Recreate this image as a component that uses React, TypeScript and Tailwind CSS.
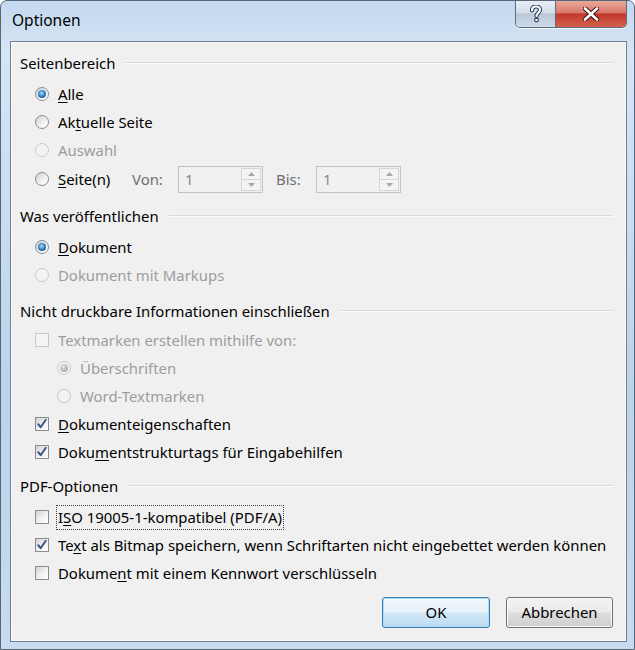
import React from "react";

function Radio({ checked, disabled }: { checked?: boolean; disabled?: boolean }) {
  return (
    <span
      className={`flex h-[14px] w-[14px] shrink-0 items-center justify-center rounded-full border ${
        disabled
          ? "border-[#c9c9c9] bg-[#f3f3f3]"
          : "border-[#8c8c8c] bg-[linear-gradient(135deg,#cfcfcf,#f8f8f8_70%,#ffffff)]"
      }`}
    >
      {checked && (
        <span
          className={`h-[8px] w-[8px] rounded-full ${
            disabled
              ? "bg-[radial-gradient(circle_at_40%_35%,#e6e6e6,#a6a6a6_75%)]"
              : "bg-[radial-gradient(circle_at_45%_40%,#a8e2ff,#2a74b8_55%,#0c3a6c)]"
          }`}
        />
      )}
    </span>
  );
}

function Check({ checked, disabled }: { checked?: boolean; disabled?: boolean }) {
  return (
    <span
      className={`relative flex h-[14px] w-[14px] shrink-0 items-center justify-center border ${
        disabled
          ? "border-[#c9c9c9] bg-[#f4f4f4]"
          : "border-[#8c8c8c] bg-[linear-gradient(135deg,#d2d2d2,#f4f4f4_60%,#ffffff)]"
      }`}
    >
      {checked && (
        <svg width="12" height="12" viewBox="0 0 12 12" className="absolute left-[0px] top-[0px]">
          <path d="M2.2 6.2 L4.6 9.2 L9.8 1.8" fill="none" stroke="#3d5487" strokeWidth="2" strokeLinecap="round" strokeLinejoin="round" />
        </svg>
      )}
    </span>
  );
}

function U({ children }: { children: React.ReactNode }) {
  return <span className="underline decoration-1 underline-offset-[2px]">{children}</span>;
}

function RadioRow({
  checked,
  disabled,
  children,
  indent = "pl-[15px]",
}: {
  checked?: boolean;
  disabled?: boolean;
  children: React.ReactNode;
  indent?: string;
}) {
  return (
    <div className={`flex h-[28px] items-center gap-[9px] ${indent} ${disabled ? "text-[#9d9d9d]" : "text-black"}`}>
      <Radio checked={checked} disabled={disabled} />
      <span>{children}</span>
    </div>
  );
}

function CheckRow({
  checked,
  disabled,
  children,
  focus,
}: {
  checked?: boolean;
  disabled?: boolean;
  children: React.ReactNode;
  focus?: boolean;
}) {
  return (
    <div className={`flex h-[28px] items-center gap-[7px] pl-[15px] ${disabled ? "text-[#9d9d9d]" : "text-black"}`}>
      <Check checked={checked} disabled={disabled} />
      <span className={focus ? "border border-dotted border-[#444] px-[1px] leading-[23px]" : "pl-[2px]"}>{children}</span>
    </div>
  );
}

function Heading({ children }: { children: React.ReactNode }) {
  return (
    <div className="flex h-[28px] items-center gap-[10px]">
      <span className="text-black">{children}</span>
      <div className="h-[2px] flex-1 border-t border-b border-t-[#d7dbe0] border-b-[#fbfbfb]" />
    </div>
  );
}

function Spin() {
  return (
    <div className="flex h-[27px] w-[85px] border border-[#c3c3c3] bg-[#f1f1f1]">
      <span className="flex-1 pl-[6px] leading-[25px] text-[#8a8a8a]">1</span>
      <div className="my-[1px] mr-[1px] flex w-[20px] flex-col border border-[#d6d6d6] bg-[#f4f4f4]">
        <div className="flex flex-1 items-center justify-center border-b border-[#d6d6d6]">
          <svg width="7" height="4" viewBox="0 0 7 4">
            <path d="M0 4 L3.5 0 L7 4 Z" fill="#a8a8a8" />
          </svg>
        </div>
        <div className="flex flex-1 items-center justify-center">
          <svg width="7" height="4" viewBox="0 0 7 4">
            <path d="M0 0 L3.5 4 L7 0 Z" fill="#a8a8a8" />
          </svg>
        </div>
      </div>
    </div>
  );
}

export default function App() {
  return (
    <div className="relative h-[650px] w-[635px] overflow-hidden rounded-t-[7px] border border-[#56677a] bg-[linear-gradient(180deg,#c4d8ee_0%,#d6e5f5_8%,#bcd3ec_60%,#c8dbf0_100%)] font-['Noto_Sans',sans-serif] text-[14.9px]">
      {/* title bar */}
      <div className="flex h-[40px] items-start">
        <div className="pl-[11px] pt-[7px] text-[15.5px] leading-[24px] text-black">Optionen</div>
        <div className="flex-1" />
        <div className="mr-[7px] flex h-[27px] overflow-hidden rounded-b-[5px] border border-t-0 border-[#5d6b7c] shadow-[0_1px_0_rgba(255,255,255,0.7)]">
          <div className="flex w-[40px] items-center justify-center border-r border-[#5d6b7c] bg-[linear-gradient(180deg,#e7eef6_0%,#d3dde9_45%,#b9c7d8_50%,#cfdae8_100%)]">
            <svg width="14" height="18" viewBox="0 0 14 18">
              <path d="M3 5.5 C3 2.5 5 1.5 7 1.5 C9.5 1.5 11 3 11 5 C11 7.5 7.5 8 7.5 11" fill="none" stroke="#2b3a52" strokeWidth="4.2" strokeLinecap="round" strokeLinejoin="round" />
              <circle cx="7.5" cy="15" r="2.4" fill="#2b3a52" />
              <path d="M3 5.5 C3 2.5 5 1.5 7 1.5 C9.5 1.5 11 3 11 5 C11 7.5 7.5 8 7.5 11" fill="none" stroke="#ffffff" strokeWidth="2.2" strokeLinecap="round" strokeLinejoin="round" />
              <circle cx="7.5" cy="15" r="1.3" fill="#ffffff" />
            </svg>
          </div>
          <div className="flex w-[70px] items-center justify-center bg-[linear-gradient(180deg,#e9a99a_0%,#d9776a_45%,#c2372a_50%,#d4614e_100%)]">
            <svg width="16" height="14" viewBox="0 0 16 14">
              <path d="M2 1.5 L14 12.5 M14 1.5 L2 12.5" stroke="#3a1010" strokeWidth="4.6" strokeLinecap="round" />
              <path d="M2 1.5 L14 12.5 M14 1.5 L2 12.5" stroke="#ffffff" strokeWidth="2.6" strokeLinecap="round" />
            </svg>
          </div>
        </div>
      </div>

      {/* client area */}
      <div className="ml-[9px] h-[601px] w-[617px] border border-[#6f7f90] bg-[#f0f0f0] pl-[9px] pr-[13px] pt-[7px] shadow-[inset_0_0_0_1px_#fafafa]">
        <Heading>Seitenbereich</Heading>
        <div className="mt-[3px]">
          <RadioRow checked>
            <U>A</U>lle
          </RadioRow>
          <RadioRow>
            Ak<U>t</U>uelle Seite
          </RadioRow>
          <RadioRow disabled>Auswahl</RadioRow>
          <div className="flex h-[30px] items-center pl-[15px]">
            <Radio />
            <span className="ml-[9px] w-[74px]">
              <U>S</U>eite(n)
            </span>
            <span className="w-[46px] text-[#6f6f6f]">Von:</span>
            <Spin />
            <span className="ml-[13px] w-[40px] text-[#6f6f6f]">Bis:</span>
            <Spin />
          </div>
        </div>

        <div className="mt-[8px]">
          <Heading>Was veröffentlichen</Heading>
          <div className="mt-[3px]">
            <RadioRow checked>
              <U>D</U>okument
            </RadioRow>
            <RadioRow disabled>Dokument mit Markups</RadioRow>
          </div>
        </div>

        <div className="mt-[8px]">
          <Heading>Nicht druckbare Informationen einschließen</Heading>
          <div className="mt-[1px]">
            <CheckRow disabled>Textmarken erstellen mithilfe von:</CheckRow>
            <RadioRow checked disabled indent="pl-[37px]">
              Überschriften
            </RadioRow>
            <RadioRow disabled indent="pl-[37px]">
              Word-Textmarken
            </RadioRow>
            <CheckRow checked>
              <U>D</U>okumenteigenschaften
            </CheckRow>
            <CheckRow checked>
              Doku<U>m</U>entstrukturtags für Eingabehilfen
            </CheckRow>
          </div>
        </div>

        <div className="mt-[6px]">
          <Heading>PDF-Optionen</Heading>
          <div className="mt-[3px]">
            <CheckRow focus>
              I<U>S</U>O 19005-1-kompatibel (PDF/A)
            </CheckRow>
            <CheckRow checked>
              Te<U>x</U>t als Bitmap speichern, wenn Schriftarten nicht eingebettet werden können
            </CheckRow>
            <CheckRow>
              Dokume<U>n</U>t mit einem Kennwort verschlüsseln
            </CheckRow>
          </div>
        </div>

        <div className="mt-[10px] flex justify-end gap-[16px]">
          <button className="h-[31px] w-[108px] rounded-[3px] border border-[#3c7fb1] bg-[linear-gradient(180deg,#f2f9fd_0%,#e6f2fa_48%,#d0e7f6_52%,#bddcf1_100%)] text-[14.9px] text-black shadow-[inset_0_0_0_1px_#a7d8f6]">
            OK
          </button>
          <button className="h-[31px] w-[107px] rounded-[3px] border border-[#707070] bg-[linear-gradient(180deg,#f2f2f2_0%,#ebebeb_48%,#dddddd_52%,#cfcfcf_100%)] text-[14.9px] text-black shadow-[inset_0_0_0_1px_#fbfbfb]">
            Abbrechen
          </button>
        </div>
      </div>
    </div>
  );
}
